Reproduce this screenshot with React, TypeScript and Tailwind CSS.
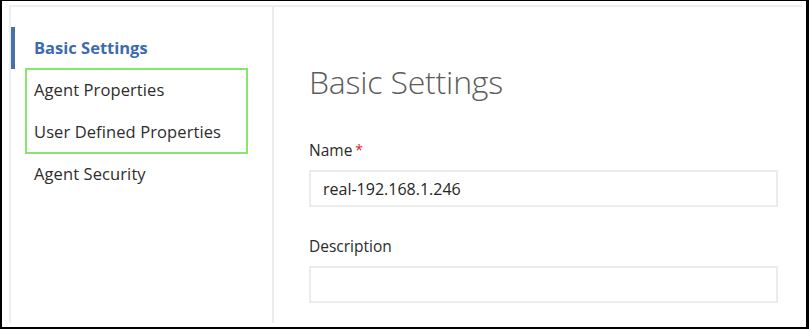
const NAV_ITEMS = [
  { label: "Basic Settings", active: true },
  { label: "Agent Properties" },
  { label: "User Defined Properties" },
  { label: "Agent Security" },
];

function Field({ label, required, value }: { label: string; required?: boolean; value?: string }) {
  return (
    <div className="flex flex-col">
      <label className="h-[22px] flex items-center text-[15.5px] text-[#2b2b2b]">
        {label}
        {required && <span className="ml-[3px] text-[#e0182d] text-[14px] -mt-[4px]">*</span>}
      </label>
      <div className="mt-[8px] h-[37px] border-2 border-[#ececec] bg-white flex items-center px-[12px] text-[16px] text-[#262626]">
        {value}
      </div>
    </div>
  );
}

export default function App() {
  return (
    <div
      className="w-[809px] h-[329px] bg-white border-t border-l-2 border-r-[3px] border-b-2 border-black pl-[7px] pt-[4px] pr-[4px] pb-[4px] flex"
      style={{ fontFamily: '"Open Sans", "Noto Sans", sans-serif' }}
    >
      <div className="flex-1 flex border-t-2 border-l-2 border-[#eceef2] bg-white">
        {/* sidebar */}
        <nav className="relative w-[263px] border-r-2 border-[#ececec] pt-[20px] shrink-0">
          {NAV_ITEMS.map((item) => (
            <div key={item.label} className="relative h-[42px] flex items-center pl-[23px]">
              {item.active && <div className="absolute left-0 top-0 bottom-0 w-[4px] bg-[#4a6fab]" />}
              <span
                className={
                  item.active
                    ? "text-[16.5px] font-bold text-[#3d6bb0]"
                    : "text-[16.5px] text-[#2d2d2d] tracking-[0.1px]"
                }
              >
                {item.label}
              </span>
            </div>
          ))}
          {/* highlight annotation */}
          <div className="absolute left-[14px] top-[61px] w-[223px] h-[86px] border-2 border-[#86e76f]" />
        </nav>

        {/* main */}
        <main className="flex-1 pl-[35px] pr-[24px] pt-[53px]">
          <h1 className="text-[32px] leading-[44px] font-light text-[#5c5c5c] tracking-[-0.2px]">Basic Settings</h1>
          <div className="mt-[36px] flex flex-col gap-[29px]">
            <Field label="Name" required value="real-192.168.1.246" />
            <Field label="Description" />
          </div>
        </main>
      </div>
    </div>
  );
}
